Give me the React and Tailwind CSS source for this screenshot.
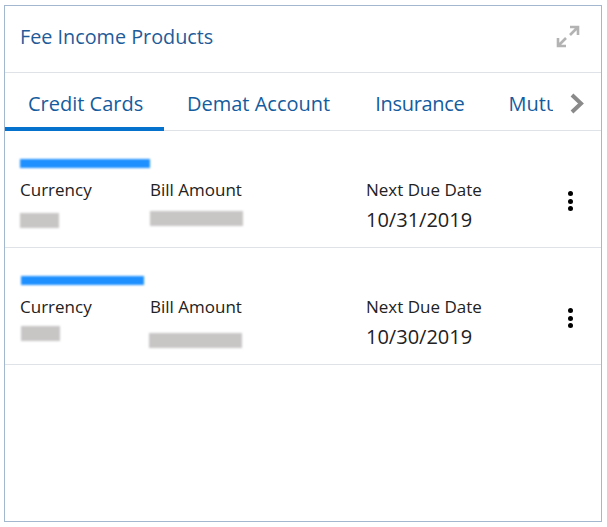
import React from 'react';

const rows = [
    { date: '10/31/2019', nameW: 'w-[130px]', cur: 'mt-[12px]', amt: 'mt-[10px]' },
    { date: '10/30/2019', nameW: 'w-[123px] ml-[1px]', cur: 'mt-[8px] ml-[1px]', amt: 'mt-[15px] -ml-[1px]' },
];

function Row({ row }) {
    return (
        <div className="h-[117px] border-b border-[#dfe3e8] pl-[15px] pt-[28px] flex flex-col">
            <div className={`h-[9px] ${row.nameW} bg-[#1e90ff] blur-[1px]`}></div>
            <div className="flex mt-[10px]">
                <div className="w-[130px]">
                    <div className="text-[17px] leading-[23px] text-[#222222]">Currency</div>
                    <div className={`h-[15px] w-[39px] ${row.cur} bg-[#c8c6c5] blur-[1px]`}></div>
                </div>
                <div className="w-[216px]">
                    <div className="text-[17px] leading-[23px] text-[#222222]">Bill Amount</div>
                    <div className={`h-[15px] w-[93px] ${row.amt} bg-[#c8c6c5] blur-[1px]`}></div>
                </div>
                <div className="w-[202px]">
                    <div className="text-[17px] leading-[23px] text-[#222222]">Next Due Date</div>
                    <div className="text-[20px] leading-[27px] mt-[5px] text-[#222222]">{row.date}</div>
                </div>
                <div className="flex flex-col gap-[2.5px] items-center mt-[13px]">
                    <span className="w-[5px] h-[5px] rounded-full bg-black"></span>
                    <span className="w-[5px] h-[5px] rounded-full bg-black"></span>
                    <span className="w-[5px] h-[5px] rounded-full bg-black"></span>
                </div>
            </div>
        </div>
    );
}

export default function App() {
    return (
        <div className="w-[607px] h-[527px] bg-white pt-[5px] pl-[4px] font-['Open_Sans','Noto_Sans',sans-serif]">
            <div className="w-[598px] h-[517px] border border-[#a3b8cf] bg-white">
                <div className="h-[67px] border-b border-[#dfe3e8] pl-[15px] pr-[21px] flex items-center justify-between">
                    <span className="text-[19.8px] leading-[27px] -mt-[5px] text-[#1f5c99]">Fee Income Products</span>
                    <svg className="-mt-[5px]" width="24" height="23" viewBox="0 0 24 23" fill="none" stroke="#b3b3b3" strokeWidth="2.6">
                        <path d="M2 21 L10 13 M2 13 V21 H10" />
                        <path d="M22 2 L14 10 M14 2 H22 V10" />
                    </svg>
                </div>
                <div className="h-[58px] border-b border-[#dfe3e8] flex">
                    <div className="w-[159px] h-[58px] border-b-4 border-[#0572ce] pl-[23px] pt-[17px] text-[20px] leading-[27px] text-[#145c9e] shrink-0">
                        Credit Cards
                    </div>
                    <div className="w-[389px] overflow-hidden flex pl-[23px] pt-[17px] text-[20px] leading-[27px] text-[#145c9e] whitespace-nowrap">
                        <span>Demat Account</span>
                        <span className="ml-[45px] tracking-[-0.3px]">Insurance</span>
                        <span className="ml-[44px]">Mutual Funds</span>
                    </div>
                    <svg className="ml-[17px] mt-[20px]" width="15" height="21" viewBox="0 0 15 21" fill="none" stroke="#8a8a8a" strokeWidth="4">
                        <path d="M2 2 L11 10.5 L2 19" />
                    </svg>
                </div>
                {rows.map((r) => <Row key={r.date} row={r} />)}
            </div>
        </div>
    );
}
